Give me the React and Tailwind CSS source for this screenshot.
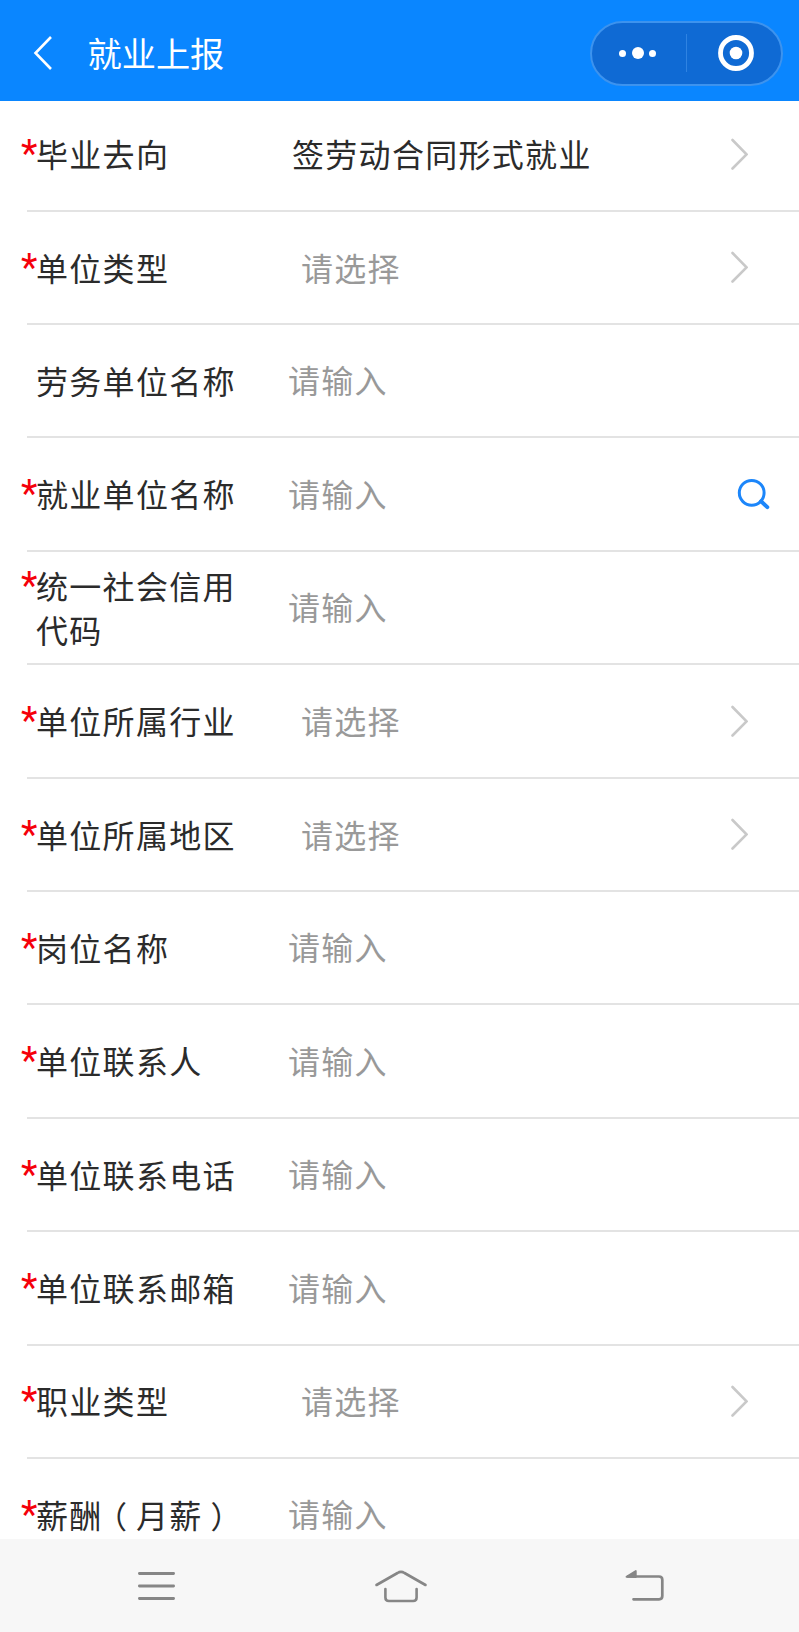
const fields = [
  { label: "毕业去向", required: true, type: "select", value: "签劳动合同形式就业" },
  { label: "单位类型", required: true, type: "select" },
  { label: "劳务单位名称", type: "input" },
  { label: "就业单位名称", required: true, type: "input", search: true },
  { label: "统一社会信用代码", required: true, type: "input" },
  { label: "单位所属行业", required: true, type: "select" },
  { label: "单位所属地区", required: true, type: "select" },
  { label: "岗位名称", required: true, type: "input" },
  { label: "单位联系人", required: true, type: "input" },
  { label: "单位联系电话", required: true, type: "input" },
  { label: "单位联系邮箱", required: true, type: "input" },
  { label: "职业类型", required: true, type: "select" },
  { label: "薪酬", note: "月薪", required: true, type: "input" },
];

function Header() {
  return (
    <header className="relative z-10 flex h-[101px] shrink-0 items-center bg-[#0a86ff] pb-[1px] pl-[33px] pr-[16.5px] pt-[6px]">
      <svg width="20" height="36" viewBox="0 0 20 36" fill="none" stroke="#fff" strokeWidth="2.6">
        <path d="M18 2 2.5 18 18 34" />
      </svg>
      <h1 className="ml-[34.5px] flex-1 pb-[2px] text-[34.2px] leading-none text-white">就业上报</h1>
      <div className="flex h-[65px] w-[193px] items-center rounded-full border-2 border-[#3d93ee] bg-[#0f6ad4]">
        <div className="flex w-[94px] items-center justify-center gap-[5.5px] pr-[2px]">
          <span className="size-[7px] rounded-full bg-white" />
          <span className="size-[12px] rounded-full bg-white" />
          <span className="size-[7px] rounded-full bg-white" />
        </div>
        <div className="h-[38px] w-[1.5px] bg-[#2f83e2]" />
        <div className="flex flex-1 items-center justify-center pl-[5px]">
          <svg width="36" height="36" viewBox="0 0 36 36">
            <circle cx="18" cy="18" r="15.5" fill="none" stroke="#fff" strokeWidth="4.8" />
            <circle cx="18" cy="18" r="6.3" fill="#fff" />
          </svg>
        </div>
      </div>
    </header>
  );
}

function FieldLabel({ field }) {
  if (field.note) {
    return (
      <span className="w-[204px] whitespace-nowrap text-[#2b2b2b]">
        {field.label}
        <span className="ml-[9px] mr-[7.5px] text-[31px] leading-none [font-feature-settings:'halt']">（</span>
        {field.note}
        <span className="ml-[8px] text-[31px] leading-none [font-feature-settings:'halt']">）</span>
      </span>
    );
  }
  return <span className="w-[204px] text-[#2b2b2b]">{field.label}</span>;
}

function FieldValue({ field }) {
  if (field.value) {
    return <div className="flex-1 pl-[4px] text-[#2b2b2b]">{field.value}</div>;
  }
  if (field.type === "select") {
    return <div className="flex-1 pl-[13px] text-[#999]">请选择</div>;
  }
  return <div className="flex-1 pb-[1px] text-[#999]">请输入</div>;
}

function FieldRow({ field }) {
  return (
    <div className="ml-[27px] flex h-[113.4px] shrink-0 items-center border-b-2 border-[#e3e3e3] text-[32px] leading-[43.7px] tracking-[1.3px]">
      <div className="-ml-[6px] flex w-[267px] items-start">
        <span className="h-[43px] w-[15px] shrink-0 font-[Roboto] text-[38px] leading-[45px] tracking-normal text-[#f5000a]">
          {field.required && "*"}
        </span>
        <FieldLabel field={field} />
      </div>
      <FieldValue field={field} />
      {field.type === "select" && (
        <svg className="mr-[51px]" width="18" height="32" viewBox="0 0 18 32" fill="none" stroke="#c9c9c9" strokeWidth="2.6" strokeLinecap="round">
          <path d="M2.5 2 16.5 16.3 2.5 30.5" />
        </svg>
      )}
      {field.search && (
        <svg className="mr-[29.5px]" width="33" height="32" viewBox="0 0 33 32" fill="none" stroke="#1c86fa" strokeLinecap="round">
          <circle cx="14.7" cy="14.8" r="12.4" strokeWidth="3" />
          <path d="m24 23.3 6.3 5.8" strokeWidth="4" />
        </svg>
      )}
    </div>
  );
}

function NavBar() {
  return (
    <nav className="relative z-10 flex h-[93px] shrink-0 items-center bg-[#f7f7f7] pl-[137px] pt-px">
      <svg width="39" height="32" viewBox="0 0 39 32" stroke="#868686" strokeWidth="2.8" strokeLinecap="round">
        <path d="M2.4 3.5h34.2M2.4 16h34.2M2.4 28.5h34.2" />
      </svg>
      <svg className="ml-[198px]" width="54" height="34" viewBox="0 0 54 34" fill="none" stroke="#868686" strokeWidth="2.6" strokeLinecap="round" strokeLinejoin="round">
        <path d="M2.5 16 23.5 4Q27 1.8 30.5 4L51.5 16" />
        <path d="M11.4 20v8.5q0 3.5 3.5 3.5h24.2q3.5 0 3.5-3.5V20" />
      </svg>
      <svg className="ml-[196.5px]" width="40" height="34" viewBox="0 0 40 34" fill="none" stroke="#868686" strokeWidth="2.7" strokeLinecap="round">
        <path d="M3 7.5H34Q37.3 7.5 37.3 10.8V27Q37.3 30.3 34 30.3H8.5" />
        <path d="M1.5 7.8 10.8 2v6z" fill="#868686" strokeWidth="1.8" strokeLinejoin="round" />
      </svg>
    </nav>
  );
}

export default function App() {
  return (
    <div
      lang="zh-CN"
      className="flex h-[1632px] w-[799px] flex-col overflow-hidden bg-white font-['Noto_Sans_CJK_SC',sans-serif]"
    >
      <Header />
      <main className="-mt-[2.7px] min-h-0 flex-1 overflow-hidden">
        {fields.map((field) => (
          <FieldRow key={field.label} field={field} />
        ))}
      </main>
      <NavBar />
    </div>
  );
}
